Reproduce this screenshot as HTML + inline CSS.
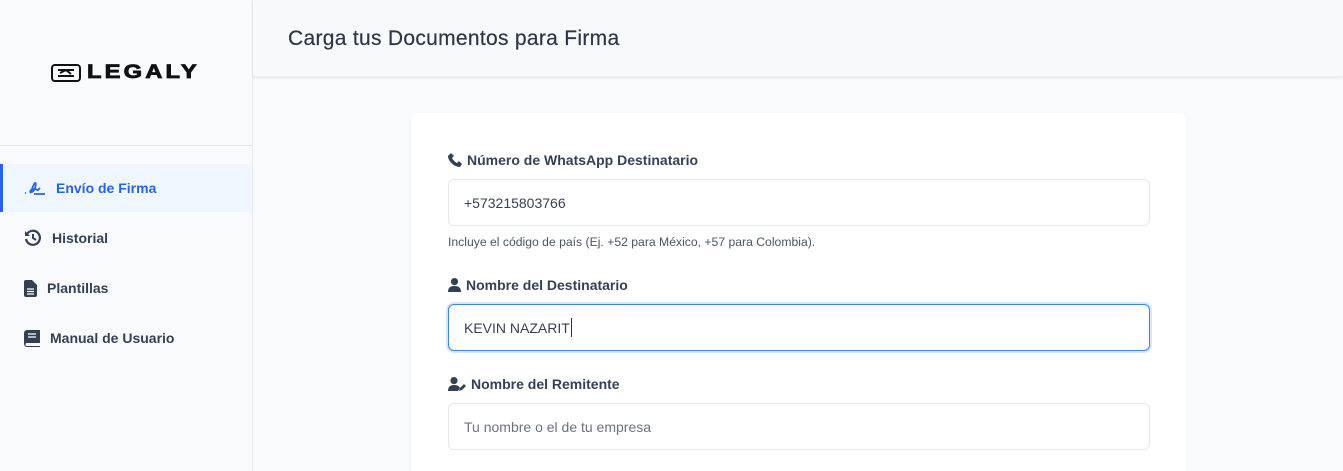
<!DOCTYPE html>
<html style="overflow:hidden"><head><meta charset="utf-8"><style>
*{box-sizing:border-box;margin:0;padding:0}
html,body{width:1343px;height:471px;overflow:hidden}
body{background:#f8fafc;font-family:"Liberation Sans",sans-serif;position:relative;color:#334155}
.side{position:absolute;left:0;top:0;width:253px;height:471px;background:#f8fafc;border-right:1px solid #e8ebef}
.logo{position:absolute;left:51px;top:62px;display:flex;align-items:center;gap:6px}
.logo span{font-weight:bold;font-size:19px;letter-spacing:2.5px;color:#111;display:inline-block;transform:scaleX(1.25);transform-origin:left;-webkit-text-stroke:0.8px #111}
.sep{position:absolute;left:0;top:145px;width:252px;border-top:1px solid #e2e5ea}
.nav{position:absolute;left:0;width:252px;height:48px;display:flex;align-items:center;font-size:14px;font-weight:bold;color:#334155}
.nav svg{margin-left:24px;margin-right:10px}
.act{background:#eff6ff;color:#2563eb;border-left:3px solid #2563eb}
.act svg{margin-left:21px}
.hdr{position:absolute;left:253px;top:0;width:1090px;height:77px;background:#f8f9fb;box-shadow:0 1px 3px rgba(0,0,0,.08);border-bottom:1px solid #eceef1}
.hdr h1{position:absolute;left:35px;top:27px;font-size:21px;font-weight:normal;color:#2d3748;letter-spacing:0.3px;-webkit-text-stroke:0.2px #2d3748}
.card{position:absolute;left:411px;top:113px;width:775px;height:358px;background:#fff;border-radius:6px 6px 0 0;box-shadow:0 1px 3px rgba(0,0,0,.05)}
.lbl{position:absolute;left:448px;font-size:14px;font-weight:bold;color:#334155;display:flex;align-items:center;gap:5px}
.inp{position:absolute;left:448px;width:702px;height:47px;border:1px solid #e2e8f0;border-radius:6px;background:#fff;font-size:14px;padding-left:15px;display:flex;align-items:center;color:#374151}
.foc{border:1px solid #3b82f6;box-shadow:0 0 0 2px rgba(59,130,246,.2)}
.hint{position:absolute;left:448px;top:235px;font-size:12.2px;color:#4b5563}
</style></head><body>
<div class="side">
 <div class="logo"><svg width="30" height="18" viewBox="0 0 30 18"><rect x="1" y="1" width="28" height="16" rx="3" fill="none" stroke="#111" stroke-width="2"/><path d="M7 6h16M9 9l6-3 5 4M7 12h16" stroke="#111" stroke-width="2" fill="none"/></svg><span>LEGALY</span></div>
 <div class="sep"></div>
 <div class="nav act" style="top:164px"><svg width="22" height="16" viewBox="0 0 22 16"><path d="M1 13h1M6 13c2-2 3-9 5-10s0 8-3 9-2-3 2-3 3 2 4 1l2-2M10 14h11" stroke="#2563eb" stroke-width="1.8" fill="none"/></svg>Envío de Firma</div>
 <div class="nav" style="top:214px"><svg width="18" height="18" viewBox="0 0 18 18"><path d="M3 5a7 7 0 1 1-1 5" stroke="#334155" stroke-width="2.2" fill="none"/><path d="M1 2v5h5z" fill="#334155"/><path d="M9 5v4l3 2" stroke="#334155" stroke-width="2" fill="none"/></svg>Historial</div>
 <div class="nav" style="top:264px"><svg width="13" height="17" viewBox="0 0 13 17"><path d="M0 2a2 2 0 0 1 2-2h6l5 5v10a2 2 0 0 1-2 2H2a2 2 0 0 1-2-2z" fill="#334155"/><path d="M3 9h7M3 11.5h7M3 14h7" stroke="#fff" stroke-width="1.2"/></svg>Plantillas</div>
 <div class="nav" style="top:314px"><svg width="16" height="17" viewBox="0 0 16 17"><path d="M0 3a3 3 0 0 1 3-3h13v13H3a1.5 1.5 0 0 0 0 3h13v1H3a3 3 0 0 1-3-3z" fill="#334155"/><path d="M4 4h8M4 7h8" stroke="#fff" stroke-width="1.3"/></svg>Manual de Usuario</div>
</div>
<div class="hdr"><h1>Carga tus Documentos para Firma</h1></div>
<div class="card"></div>
<div class="lbl" style="top:152px"><svg width="14" height="14" viewBox="0 0 14 14"><path d="M3 0l3 3-2 2c1 2 3 4 5 5l2-2 3 3-2 3C6 14 0 8 0 3z" fill="#334155"/></svg>Número de WhatsApp Destinatario</div>
<div class="inp" style="top:179px">+573215803766</div>
<div class="hint">Incluye el código de país (Ej. +52 para México, +57 para Colombia).</div>
<div class="lbl" style="top:277px"><svg width="13" height="14" viewBox="0 0 13 14"><circle cx="6.5" cy="3.6" r="3.6" fill="#334155"/><path d="M0 14c0-5 3-6 6.5-6s6.5 1 6.5 6z" fill="#334155"/></svg>Nombre del Destinatario</div>
<div class="inp foc" style="top:304px">KEVIN NAZARIT<span style="border-left:1px solid #333;height:19px;margin-left:1px"></span></div>
<div class="lbl" style="top:376px"><svg width="18" height="14" viewBox="0 0 18 14"><circle cx="6" cy="3.6" r="3.6" fill="#334155"/><path d="M0 14c0-5 3-6 6-6s5 1 6 3l-2 3z" fill="#334155"/><path d="M11 14l1-3 4-4 2 2-4 4z" fill="#334155"/></svg>Nombre del Remitente</div>
<div class="inp" style="top:403px;color:#6b7280">Tu nombre o el de tu empresa</div>
</body></html>
